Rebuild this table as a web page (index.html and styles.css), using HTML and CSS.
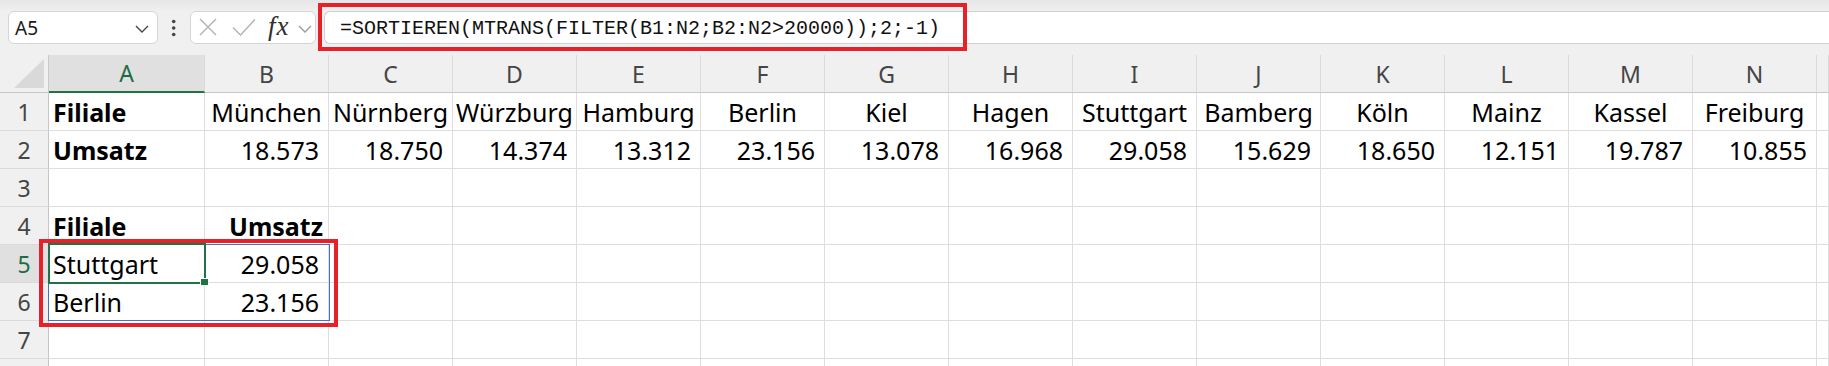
FILE: index.html
```html
<!DOCTYPE html>
<html lang="de">
<head>
<meta charset="utf-8">
<title>Excel – SORTIEREN</title>
<link rel="stylesheet" href="styles.css">
</head>
<body>
<div class="page">
  <div class="bar">
    <div class="namebox">
      <span class="ref">A5</span>
      <svg class="chev" width="14" height="8" viewBox="0 0 14 8"><path d="M1 1 L7 7 L13 1" fill="none" stroke="#444" stroke-width="1.4"/></svg>
    </div>
    <div class="dots">
      <svg width="32" height="33" viewBox="0 0 32 33"><circle cx="15.7" cy="10.5" r="1.8" fill="#444"/><circle cx="15.7" cy="17" r="1.8" fill="#444"/><circle cx="15.7" cy="23.5" r="1.8" fill="#444"/></svg>
    </div>
    <div class="fxbox">
      <svg class="ico-x" width="18" height="18" viewBox="0 0 18 18"><path d="M1 1 L17 17 M17 1 L1 17" stroke="#b5b5b5" stroke-width="1.5" fill="none"/></svg>
      <svg class="ico-check" width="24" height="18" viewBox="0 0 24 18"><path d="M1 9.5 L8.5 17 L23 1.5" stroke="#b5b5b5" stroke-width="1.5" fill="none"/></svg>
      <span class="fx">fx</span>
      <svg class="chev-s" width="14" height="8" viewBox="0 0 14 8"><path d="M1 1 L7 7 L13 1" fill="none" stroke="#9a9a9a" stroke-width="1.3"/></svg>
    </div>
    <div class="formula">=SORTIEREN(MTRANS(FILTER(B1:N2;B2:N2&gt;20000));2;-1)</div>
  </div>

  <div class="sheet">
    <div class="corner"><svg width="31" height="30" viewBox="0 0 31 30"><path d="M30 0 L30 29 L0 29 Z" fill="#d9d9d9"/></svg></div>
    <div class="ch sel">A</div><div class="ch">B</div><div class="ch">C</div><div class="ch">D</div><div class="ch">E</div><div class="ch">F</div><div class="ch">G</div><div class="ch">H</div><div class="ch">I</div><div class="ch">J</div><div class="ch">K</div><div class="ch">L</div><div class="ch">M</div><div class="ch">N</div><div class="ch"></div>

    <div class="rh">1</div>
    <div class="c b">Filiale</div><div class="c m">München</div><div class="c m">Nürnberg</div><div class="c m">Würzburg</div><div class="c m">Hamburg</div><div class="c m">Berlin</div><div class="c m">Kiel</div><div class="c m">Hagen</div><div class="c m">Stuttgart</div><div class="c m">Bamberg</div><div class="c m">Köln</div><div class="c m">Mainz</div><div class="c m">Kassel</div><div class="c m">Freiburg</div><div class="c"></div>

    <div class="rh">2</div>
    <div class="c b">Umsatz</div><div class="c n">18.573</div><div class="c n">18.750</div><div class="c n">14.374</div><div class="c n">13.312</div><div class="c n">23.156</div><div class="c n">13.078</div><div class="c n">16.968</div><div class="c n">29.058</div><div class="c n">15.629</div><div class="c n">18.650</div><div class="c n">12.151</div><div class="c n">19.787</div><div class="c n">10.855</div><div class="c"></div>

    <div class="rh">3</div>
    <div class="c"></div><div class="c"></div><div class="c"></div><div class="c"></div><div class="c"></div><div class="c"></div><div class="c"></div><div class="c"></div><div class="c"></div><div class="c"></div><div class="c"></div><div class="c"></div><div class="c"></div><div class="c"></div><div class="c"></div>

    <div class="rh">4</div>
    <div class="c b">Filiale</div><div class="c b r">Umsatz</div><div class="c"></div><div class="c"></div><div class="c"></div><div class="c"></div><div class="c"></div><div class="c"></div><div class="c"></div><div class="c"></div><div class="c"></div><div class="c"></div><div class="c"></div><div class="c"></div><div class="c"></div>

    <div class="rh sel">5</div>
    <div class="c">Stuttgart</div><div class="c n">29.058</div><div class="c"></div><div class="c"></div><div class="c"></div><div class="c"></div><div class="c"></div><div class="c"></div><div class="c"></div><div class="c"></div><div class="c"></div><div class="c"></div><div class="c"></div><div class="c"></div><div class="c"></div>

    <div class="rh">6</div>
    <div class="c">Berlin</div><div class="c n">23.156</div><div class="c"></div><div class="c"></div><div class="c"></div><div class="c"></div><div class="c"></div><div class="c"></div><div class="c"></div><div class="c"></div><div class="c"></div><div class="c"></div><div class="c"></div><div class="c"></div><div class="c"></div>

    <div class="rh">7</div>
    <div class="c"></div><div class="c"></div><div class="c"></div><div class="c"></div><div class="c"></div><div class="c"></div><div class="c"></div><div class="c"></div><div class="c"></div><div class="c"></div><div class="c"></div><div class="c"></div><div class="c"></div><div class="c"></div><div class="c"></div>

    <div class="rh"></div>
    <div class="c"></div><div class="c"></div><div class="c"></div><div class="c"></div><div class="c"></div><div class="c"></div><div class="c"></div><div class="c"></div><div class="c"></div><div class="c"></div><div class="c"></div><div class="c"></div><div class="c"></div><div class="c"></div><div class="c"></div>

    <div class="spill"></div>
    <div class="cursor"></div>
    <div class="handle"></div>
  </div>

  <div class="mark mark-formula"></div>
  <div class="mark mark-result"></div>
</div>
</body>
</html>
```

FILE: styles.css
```css
html, body {
  margin: 0;
  padding: 0;
  background: #ffffff;
  overflow: hidden;
}

.page {
  position: relative;
  width: 1829px;
  height: 366px;
  overflow: hidden;
  font-family: "Noto Sans", "Open Sans", sans-serif;
  color: #000;
}

/* ---------- formula bar ---------- */
.bar {
  height: 55px;
  box-sizing: border-box;
  display: flex;
  align-items: flex-start;
  padding: 11px 0 0 8px;
  background: linear-gradient(#e6e6e6 0, #eeeeee 9px, #f0f0f0 11px, #f0f0f0 100%);
}

.namebox {
  width: 150px;
  height: 33px;
  box-sizing: border-box;
  border: 1px solid #d5d5d5;
  border-radius: 6px;
  background: #fff;
  display: flex;
  align-items: center;
  justify-content: space-between;
  padding: 0 8px 0 6px;
}

.ref {
  font-size: 19px;
  color: #1a1a1a;
}

.chev { margin-top: 2px; }

.dots {
  width: 32px;
  height: 33px;
}
.dots svg { display: block; }

.fxbox {
  width: 126px;
  height: 33px;
  box-sizing: border-box;
  border: 1px solid #d5d5d5;
  border-radius: 6px;
  background: #fff;
  display: flex;
  align-items: center;
  padding-left: 8px;
}

.ico-x { margin-top: -1px; }
.ico-check { margin-left: 15px; margin-top: -1px; }

.fx {
  margin-left: 12px;
  width: 23px;
  font-family: "Liberation Serif", "DejaVu Serif", serif;
  font-style: italic;
  font-size: 27px;
  line-height: 27px;
  color: #303030;
  letter-spacing: 1px;
  margin-top: -2px;
}

.chev-s { margin-left: 7px; margin-top: 3px; }

.formula {
  flex: 1;
  margin-left: 8px;
  height: 33px;
  box-sizing: border-box;
  border: 1px solid #d0d0d0;
  border-right: none;
  border-radius: 6px 0 0 6px;
  background: #fff;
  padding: 2px 0 0 15px;
  font-family: "Liberation Mono", "DejaVu Sans Mono", monospace;
  font-size: 20px;
  line-height: 29px;
  color: #111;
  white-space: nowrap;
}

/* ---------- sheet grid ---------- */
.sheet {
  position: relative;
  display: grid;
  grid-template-columns: 49px 156px repeat(13, 124px) 1fr;
  grid-template-rows: 38px repeat(8, 38px);
  background: #fff;
}

.corner {
  background: #f0f0f0;
  border-right: 1px solid #c9c9c9;
  border-bottom: 1px solid #c9c9c9;
  box-sizing: border-box;
  display: flex;
  align-items: flex-end;
  justify-content: flex-end;
  padding: 0 3px 3px 0;
}
.corner svg { display: block; }

.ch {
  background: #f0f0f0;
  border-right: 1px solid #dadada;
  border-bottom: 1px solid #c6c6c6;
  box-sizing: border-box;
  text-align: center;
  font-size: 23px;
  line-height: 36px;
  padding-top: 1px;
  color: #454545;
}

.ch.sel {
  background: #e0e0e0;
  color: #1e6d42;
  border-bottom: 2px solid #217346;
  line-height: 35px;
}

.rh {
  background: #f0f0f0;
  border-right: 1px solid #c6c6c6;
  border-bottom: 1px solid #dadada;
  box-sizing: border-box;
  text-align: center;
  font-size: 23px;
  line-height: 35px;
  padding-top: 2px;
  color: #454545;
}

.rh.sel {
  background: #e0e0e0;
  color: #1e6d42;
}

.c {
  border-right: 1px solid #dedede;
  border-bottom: 1px solid #dedede;
  box-sizing: border-box;
  font-size: 25px;
  line-height: 35px;
  padding: 2px 4px 0 4px;
  white-space: nowrap;
  overflow: hidden;
}

.c.b { font-weight: 700; }
.c.m { text-align: center; padding: 2px 0 0 0; }
.c.n { text-align: right; padding-right: 9px; }
.c.r { text-align: right; padding-right: 5px; }

/* ---------- selection overlays ---------- */
.spill {
  position: absolute;
  left: 48px;
  top: 189px;
  width: 282px;
  height: 77px;
  box-sizing: border-box;
  border: 1px solid #4472c4;
  pointer-events: none;
}

.cursor {
  position: absolute;
  left: 48px;
  top: 188px;
  width: 158px;
  height: 41px;
  box-sizing: border-box;
  border: 2px solid #217346;
  pointer-events: none;
}

.handle {
  position: absolute;
  left: 200px;
  top: 223px;
  width: 9px;
  height: 8px;
  box-sizing: border-box;
  background: #217346;
  border: 1px solid #fff;
}

/* ---------- red annotation boxes ---------- */
.mark {
  position: absolute;
  box-sizing: border-box;
  border: 4px solid #e8202a;
  pointer-events: none;
}

.mark-formula {
  left: 318px;
  top: 3px;
  width: 649px;
  height: 48px;
}

.mark-result {
  left: 39px;
  top: 239px;
  width: 299px;
  height: 88px;
}
```
